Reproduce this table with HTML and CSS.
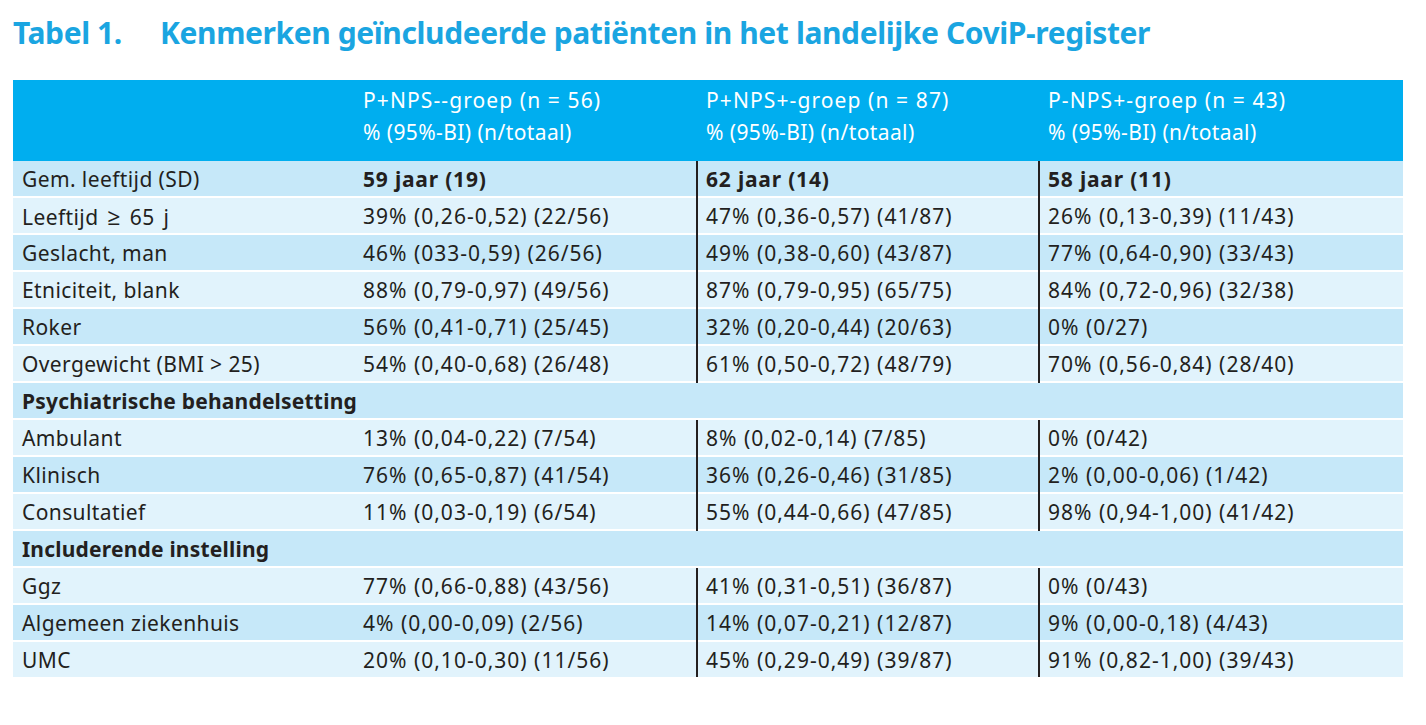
FILE: index.html
```html
<!DOCTYPE html>
<html lang="nl">
<head>
<meta charset="utf-8">
<title>Tabel 1</title>
<link rel="stylesheet" href="styles.css">
</head>
<body>
<div class="page">
  <h1 class="title"><span class="num">Tabel 1.</span><span>Kenmerken geïncludeerde patiënten in het landelijke CoviP-register</span></h1>
  <div class="table">
    <div class="head">
      <div class="cell"></div>
      <div class="cell"><span class="l1">P+NPS--groep (n = 56)</span><br><span class="l2">% (95%-BI) (n/totaal)</span></div>
      <div class="cell c3"><span class="l1">P+NPS+-groep (n = 87)</span><br><span class="l2">% (95%-BI) (n/totaal)</span></div>
      <div class="cell c4"><span class="l1">P-NPS+-groep (n = 43)</span><br><span class="l2">% (95%-BI) (n/totaal)</span></div>
    </div>
    <div class="row dark">
      <div class="cell lbl">Gem. leeftijd (SD)</div>
      <div class="cell v2 b">59 jaar (19)</div>
      <div class="cell v3 div b">62 jaar (14)</div>
      <div class="cell v4 div b">58 jaar (11)</div>
    </div>
    <div class="row light">
      <div class="cell lbl wide">Leeftijd <span class="ge">≥</span> 65 j</div>
      <div class="cell v2">39% (0,26-0,52) (22/56)</div>
      <div class="cell v3 div">47% (0,36-0,57) (41/87)</div>
      <div class="cell v4 div">26% (0,13-0,39) (11/43)</div>
    </div>
    <div class="row dark">
      <div class="cell lbl">Geslacht, man</div>
      <div class="cell v2">46% (033-0,59) (26/56)</div>
      <div class="cell v3 div">49% (0,38-0,60) (43/87)</div>
      <div class="cell v4 div">77% (0,64-0,90) (33/43)</div>
    </div>
    <div class="row light">
      <div class="cell lbl">Etniciteit, blank</div>
      <div class="cell v2">88% (0,79-0,97) (49/56)</div>
      <div class="cell v3 div">87% (0,79-0,95) (65/75)</div>
      <div class="cell v4 div">84% (0,72-0,96) (32/38)</div>
    </div>
    <div class="row dark">
      <div class="cell lbl">Roker</div>
      <div class="cell v2">56% (0,41-0,71) (25/45)</div>
      <div class="cell v3 div">32% (0,20-0,44) (20/63)</div>
      <div class="cell v4 div">0% (0/27)</div>
    </div>
    <div class="row light">
      <div class="cell lbl">Overgewicht (BMI &gt; 25)</div>
      <div class="cell v2">54% (0,40-0,68) (26/48)</div>
      <div class="cell v3 div">61% (0,50-0,72) (48/79)</div>
      <div class="cell v4 div">70% (0,56-0,84) (28/40)</div>
    </div>
    <div class="row dark">
      <div class="cell lbl section">Psychiatrische behandelsetting</div>
    </div>
    <div class="row light">
      <div class="cell lbl">Ambulant</div>
      <div class="cell v2">13% (0,04-0,22) (7/54)</div>
      <div class="cell v3 div">8% (0,02-0,14) (7/85)</div>
      <div class="cell v4 div">0% (0/42)</div>
    </div>
    <div class="row dark">
      <div class="cell lbl">Klinisch</div>
      <div class="cell v2">76% (0,65-0,87) (41/54)</div>
      <div class="cell v3 div">36% (0,26-0,46) (31/85)</div>
      <div class="cell v4 div">2% (0,00-0,06) (1/42)</div>
    </div>
    <div class="row light">
      <div class="cell lbl">Consultatief</div>
      <div class="cell v2">11% (0,03-0,19) (6/54)</div>
      <div class="cell v3 div">55% (0,44-0,66) (47/85)</div>
      <div class="cell v4 div">98% (0,94-1,00) (41/42)</div>
    </div>
    <div class="row dark">
      <div class="cell lbl section">Includerende instelling</div>
    </div>
    <div class="row light">
      <div class="cell lbl">Ggz</div>
      <div class="cell v2">77% (0,66-0,88) (43/56)</div>
      <div class="cell v3 div">41% (0,31-0,51) (36/87)</div>
      <div class="cell v4 div">0% (0/43)</div>
    </div>
    <div class="row dark">
      <div class="cell lbl">Algemeen ziekenhuis</div>
      <div class="cell v2">4% (0,00-0,09) (2/56)</div>
      <div class="cell v3 div">14% (0,07-0,21) (12/87)</div>
      <div class="cell v4 div">9% (0,00-0,18) (4/43)</div>
    </div>
    <div class="row light last">
      <div class="cell lbl">UMC</div>
      <div class="cell v2">20% (0,10-0,30) (11/56)</div>
      <div class="cell v3 div">45% (0,29-0,49) (39/87)</div>
      <div class="cell v4 div">91% (0,82-1,00) (39/43)</div>
    </div>
  </div>
</div>
</body>
</html>
```
FILE: styles.css
```css
html, body {
  margin: 0;
  padding: 0;
  background: #ffffff;
}

.page {
  padding: 0 0 0 13px;
  width: 1390px;
  font-family: "Noto Sans", "Open Sans", sans-serif;
  color: #231f20;
}

.title {
  margin: 0;
  padding-top: 14px;
  height: 80px;
  box-sizing: border-box;
  font-size: 30px;
  line-height: 38px;
  font-weight: 700;
  letter-spacing: -0.4px;
  color: #1aa5e1;
  white-space: nowrap;
}

.title .num {
  display: inline-block;
  width: 147px;
}

.table {
  width: 1390px;
  font-size: 21px;
}

.head,
.row {
  display: grid;
  grid-template-columns: 340px 343px 342px 365px;
}

.head {
  height: 81px;
  background: #00aeef;
  color: #ffffff;
}

.head .cell {
  padding: 4px 0 0 10px;
  line-height: 32px;
  white-space: nowrap;
}

.head .l1 {
  letter-spacing: 1.1px;
}

.head .l2 {
  letter-spacing: 0.4px;
}

.row {
  height: 37px;
  background-repeat: no-repeat;
  background-position: 0 100%;
  background-size: 100% 2px;
  background-image: linear-gradient(#ffffff, #ffffff);
}

.row.last {
  height: 35px;
  background-image: none;
}

.row.dark {
  background-color: #c6e8f9;
}

.row.light {
  background-color: #e1f3fc;
}

.row .cell {
  padding-top: 1px;
  line-height: 35px;
  white-space: nowrap;
  letter-spacing: 1px;
}

.row .lbl {
  padding-left: 9px;
  letter-spacing: 0.4px;
}

.row .wide {
  word-spacing: 3px;
}

.row .ge {
  font-size: 23px;
}

.v2 {
  padding-left: 10px;
}

.v3,
.v4 {
  padding-left: 8px;
}

.div {
  border-left: 2px solid #231f20;
}

.row .b {
  font-weight: 700;
  letter-spacing: 0.8px;
}

.row .section {
  grid-column: 1 / -1;
  font-weight: 700;
  letter-spacing: 0.2px;
}
```
